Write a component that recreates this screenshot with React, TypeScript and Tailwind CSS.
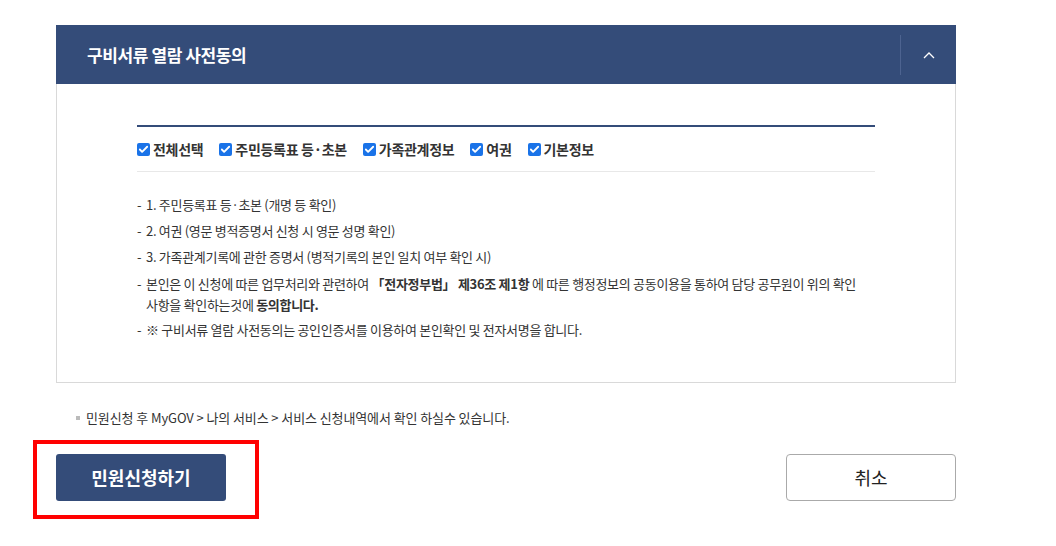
import { Check } from "lucide-react";

const font = { fontFamily: '"Noto Sans CJK KR", "Noto Sans", sans-serif' };

const checks = ["전체선택", "주민등록표 등·초본", "가족관계정보", "여권", "기본정보"];

function Box() {
  return (
    <span className="flex h-[13px] w-[13px] items-center justify-center rounded-[2px] bg-[#1a73e8]">
      <Check className="h-[11px] w-[11px] text-white" strokeWidth={4} />
    </span>
  );
}

export default function App() {
  return (
    <div className="min-h-[546px] w-[1056px] bg-white pt-[25px] text-[#222]" style={font}>
      <div className="ml-[56px] w-[900px]">
        <div className="flex h-[59px] items-center bg-[#344c79] pl-[31px]">
          <h2 className="flex-1 text-[17px] font-bold tracking-[-0.4px] text-white">구비서류 열람 사전동의</h2>
          <div className="h-[40px] w-px bg-[#4d6390]" />
          <div className="flex w-[55px] items-center justify-center">
            <svg width="12" height="8" viewBox="0 0 12 8" fill="none">
              <path d="M1 7 L6 2 L11 7" stroke="white" strokeWidth="1.3" />
            </svg>
          </div>
        </div>
        <div className="h-[299px] border border-t-0 border-[#d9d9d9] px-[80px] pt-[41px]">
          <div className="border-t-2 border-[#344c79]">
            <div className="flex h-[45px] items-center gap-[16px] border-b border-[#e8e8e8] text-[14px] font-bold tracking-[-0.3px] text-[#333]">
              {checks.map((c) => (
                <label key={c} className="flex items-center gap-[3px]">
                  <Box />
                  <span>{c}</span>
                </label>
              ))}
            </div>
          </div>
          <ul className="mt-[20px] text-[13px] leading-[26px] tracking-[-0.3px] text-[#333]">
            <li className="flex"><span className="w-[9px] shrink-0">-</span>1. 주민등록표 등·초본 (개명 등 확인)</li>
            <li className="flex"><span className="w-[9px] shrink-0">-</span>2. 여권 (영문 병적증명서 신청 시 영문 성명 확인)</li>
            <li className="flex"><span className="w-[9px] shrink-0">-</span>3. 가족관계기록에 관한 증명서 (병적기록의 본인 일치 여부 확인 시)</li>
            <li className="flex pt-[3px] pb-[2px] leading-[21px]">
              <span className="w-[9px] shrink-0">-</span>
              <span className="w-[716px]">
                본인은 이 신청에 따른 업무처리와 관련하여 <b>「전자정부법」 제36조 제1항</b> 에 따른 행정정보의 공동이용을 통하여 담당 공무원이 위의 확인 사항을 확인하는것에 <b>동의합니다.</b>
              </span>
            </li>
            <li className="flex"><span className="w-[9px] shrink-0">-</span>※ 구비서류 열람 사전동의는 공인인증서를 이용하여 본인확인 및 전자서명을 합니다.</li>
          </ul>
        </div>
        <p className="mt-[25px] flex items-center pl-[20px] text-[13px] tracking-[-0.1px] text-[#333]">
          <span className="mr-[6px] h-[4px] w-[4px] bg-[#bbb]" />
          민원신청 후 MyGOV &gt; 나의 서비스 &gt; 서비스 신청내역에서 확인 하실수 있습니다.
        </p>
        <div className="mt-[26px] flex justify-between">
          <div className="relative">
            <button className="h-[47px] w-[170px] rounded-[3px] bg-[#344c79] text-[18px] font-bold text-white">민원신청하기</button>
            <div className="absolute -left-[23px] -top-[14px] h-[79px] w-[226px] border-[4px] border-[#ff0000]" />
          </div>
          <button className="h-[47px] w-[170px] rounded-[4px] border border-[#aaa] bg-white text-[18px] text-[#222]">취소</button>
        </div>
      </div>
    </div>
  );
}
